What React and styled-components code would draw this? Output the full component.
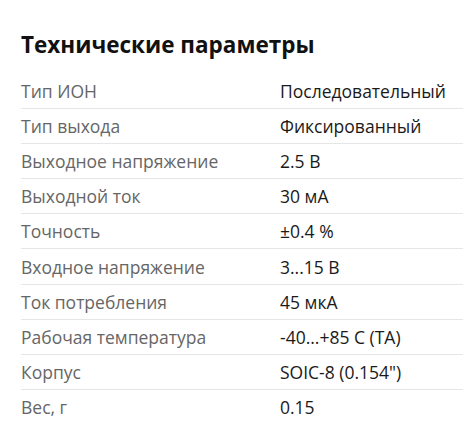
import React from 'react';
import styled, { createGlobalStyle } from 'styled-components';

const GlobalStyle = createGlobalStyle`
  body {
    margin: 0;
    background: #fff;
    font-family: "Open Sans", "Liberation Sans", sans-serif;
  }
`;

const specs = [
  ['Тип ИОН', 'Последовательный'],
  ['Тип выхода', 'Фиксированный'],
  ['Выходное напряжение', '2.5 В'],
  ['Выходной ток', '30 мА'],
  ['Точность', '±0.4 %'],
  ['Входное напряжение', '3...15 В'],
  ['Ток потребления', '45 мкА'],
  ['Рабочая температура', '-40...+85 C (TA)'],
  ['Корпус', 'SOIC-8 (0.154")'],
  ['Вес, г', '0.15'],
];

const App = () => (
  <Section>
    <GlobalStyle />
    <Title>Технические параметры</Title>
    <Table>
      {specs.map(([name, value], i) => (
        <Row key={name} last={i === specs.length - 1}>
          <Label>{name}</Label>
          <Value>{value}</Value>
        </Row>
      ))}
    </Table>
  </Section>
);

export default App;

const Section = styled.section`
  padding: 29px 0 0 21px;
`;

const Title = styled.h2`
  margin: 0 0 13px;
  font-size: 22.5px;
  line-height: 32px;
  font-weight: 700;
  color: #111;
`;

const Table = styled.div`
  display: flex;
  flex-direction: column;
`;

const Row = styled.div`
  box-sizing: border-box;
  display: grid;
  grid-template-columns: 259px 1fr;
  height: 35.1px;
  align-items: center;
  font-size: 17.5px;
  border-bottom: ${p => (p.last ? 'none' : '1px solid #e6e6e6')};
`;

const Label = styled.span`
  color: #666;
`;

const Value = styled.span`
  color: #1a1a1a;
`;
